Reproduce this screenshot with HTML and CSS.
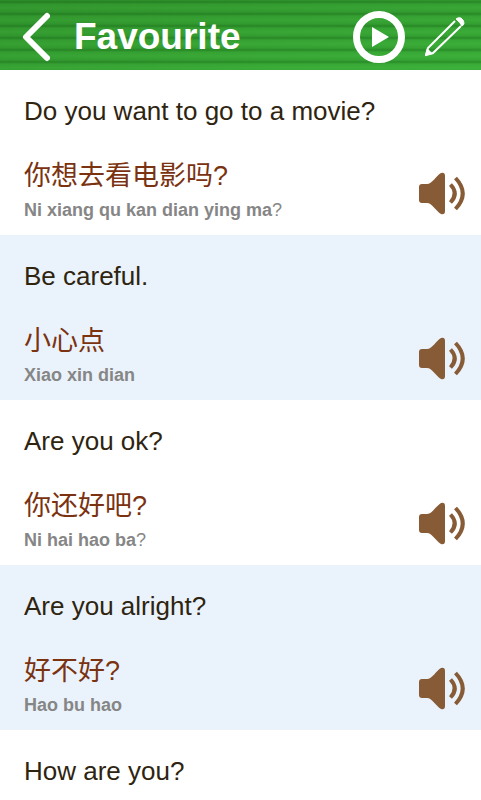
FILE: index.html
```html
<!DOCTYPE html>
<html lang="en">
<head>
  <meta charset="UTF-8" />
  <meta name="viewport" content="width=device-width, initial-scale=1.0"/>
  <title>Favourite</title>
  <link rel="stylesheet" href="styles.css">
</head>
<body>
  <svg class="defs" aria-hidden="true">
    <symbol id="speaker" viewBox="0 0 48 44">
      <path d="M4 12 H9 C14 12 18 4 23 1 Q27 0 27 4 V39 Q27 43 23 42 C18 39 14 31 9 31 H4 Q1 31 1 28 V15 Q1 12 4 12 Z" fill="#875b35"/>
      <path d="M32.500 12.500 Q41 21.500 32.500 30.500" fill="none" stroke="#875b35" stroke-width="4"/>
      <path d="M37.500 6 Q52 21.500 37.500 37" fill="none" stroke="#875b35" stroke-width="4"/>
    </symbol>
  </svg>

  <header class="topbar">
    <button class="icon-btn back" aria-label="Back">
      <svg width="28" height="50" viewBox="0 0 28 50">
        <path d="M25 4 L4 25 L25 46" fill="none" stroke="#fff" stroke-width="6" stroke-linecap="round" stroke-linejoin="round"/>
      </svg>
    </button>
    <h1>Favourite</h1>
    <button class="icon-btn play" aria-label="Play all">
      <svg width="52" height="52" viewBox="0 0 52 52">
        <circle cx="26" cy="26" r="22.500" fill="none" stroke="#fff" stroke-width="7"/>
        <path d="M19 16 L36 26 L19 36 Z" fill="#fff"/>
      </svg>
    </button>
    <button class="icon-btn edit" aria-label="Edit">
      <svg width="40" height="40" viewBox="0 0 40 40">
        <path d="M30 4 L3 31 L1 38 L8 36 L36 9" fill="none" stroke="#fff" stroke-width="2"/>
        <path d="M0 39 L2 31 L8 37 Z" fill="#fff"/>
        <path d="M31 2 Q33 0 36 1 Q39 3 39 6 Q39 8 37 9 Q35 5 31 2 Z" fill="#fff" stroke="#fff" stroke-width="1"/>
      </svg>
    </button>
  </header>

  <ul class="phrases">
    <li class="phrase">
      <div class="text">
        <p class="english">Do you want to go to a movie?</p>
        <p class="chinese" lang="zh">你想去看电影吗?</p>
        <p class="pinyin">Ni xiang qu kan dian ying ma<span class="mark">?</span></p>
      </div>
      <button class="icon-btn sound" aria-label="Listen"><svg width="48" height="44"><use href="#speaker"/></svg></button>
    </li>
    <li class="phrase">
      <div class="text">
        <p class="english">Be careful.</p>
        <p class="chinese" lang="zh">小心点</p>
        <p class="pinyin">Xiao xin dian</p>
      </div>
      <button class="icon-btn sound" aria-label="Listen"><svg width="48" height="44"><use href="#speaker"/></svg></button>
    </li>
    <li class="phrase">
      <div class="text">
        <p class="english">Are you ok?</p>
        <p class="chinese" lang="zh">你还好吧?</p>
        <p class="pinyin">Ni hai hao ba<span class="mark">?</span></p>
      </div>
      <button class="icon-btn sound" aria-label="Listen"><svg width="48" height="44"><use href="#speaker"/></svg></button>
    </li>
    <li class="phrase">
      <div class="text">
        <p class="english">Are you alright?</p>
        <p class="chinese" lang="zh">好不好?</p>
        <p class="pinyin">Hao bu hao</p>
      </div>
      <button class="icon-btn sound" aria-label="Listen"><svg width="48" height="44"><use href="#speaker"/></svg></button>
    </li>
    <li class="phrase">
      <div class="text">
        <p class="english">How are you?</p>
      </div>
    </li>
  </ul>
</body>
</html>
```
FILE: styles.css
```css
* {
  box-sizing: border-box;
}
body {
  margin: 0;
  height: 100vh;
  display: flex;
  flex-direction: column;
  overflow: hidden;
  background: #fff;
  font-family: "Liberation Sans", "Noto Sans CJK SC", sans-serif;
}
.defs {
  display: none;
}
.icon-btn {
  display: block;
  flex: none;
  padding: 0;
  border: none;
  background: none;
  cursor: pointer;
}
.icon-btn svg {
  display: block;
}

/* header with corrugated green background */
.topbar {
  display: flex;
  align-items: center;
  flex: none;
  height: 70px;
  padding: 4px 16px 0 22px;
  background:
    repeating-linear-gradient(to bottom, rgba(0, 60, 0, 0.1) 0, rgba(0, 60, 0, 0.3) 2px, rgba(0, 60, 0, 0.06) 4px, rgba(0, 60, 0, 0) 8px, rgba(0, 60, 0, 0.1) 12px),
    linear-gradient(to bottom right, #33982f, #3db33b);
}
.topbar h1 {
  flex: 1;
  margin: 0 0 0 24px;
  color: #fff;
  font-size: 37px;
  line-height: 44px;
}
.topbar .edit {
  margin-left: 20px;
}

.phrases {
  flex: 1;
  margin: 0;
  padding: 0;
  list-style: none;
  overflow-y: auto;
  scrollbar-width: none;
}
.phrase {
  display: flex;
  align-items: flex-end;
  justify-content: space-between;
  min-height: 165px;
  padding: 24px 15px 11px 24px;
}
.phrase:nth-child(even) {
  background: #eaf3fb;
}
.text {
  align-self: flex-start;
}
.text p {
  margin: 0;
}
.english {
  color: #2e2410;
  font-size: 26px;
  line-height: 34px;
}
.text .chinese {
  margin-top: 28px;
  color: #7a3210;
  font-size: 27px;
  line-height: 40px;
}
.pinyin {
  color: #868686;
  font-size: 18px;
  font-weight: bold;
  line-height: 28px;
}
.mark {
  font-weight: normal;
}
.sound {
  margin-bottom: 8px;
}
```
